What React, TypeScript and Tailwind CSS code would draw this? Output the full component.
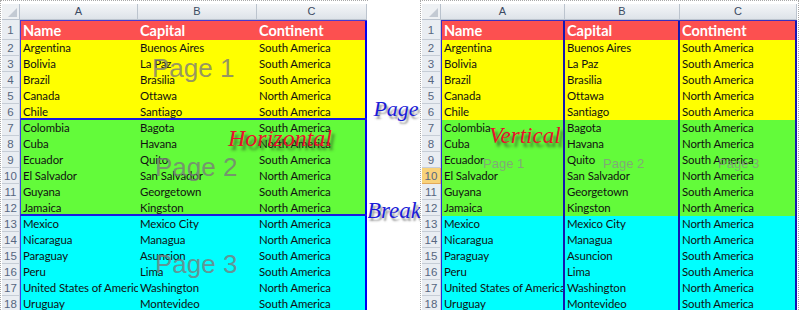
import React from "react";
import clsx from "clsx";

const DATA: [string, string, string][] = [
  ["Argentina", "Buenos Aires", "South America"],
  ["Bolivia", "La Paz", "South America"],
  ["Brazil", "Brasilia", "South America"],
  ["Canada", "Ottawa", "North America"],
  ["Chile", "Santiago", "South America"],
  ["Colombia", "Bagota", "South America"],
  ["Cuba", "Havana", "North America"],
  ["Ecuador", "Quito", "South America"],
  ["El Salvador", "San Salvador", "North America"],
  ["Guyana", "Georgetown", "South America"],
  ["Jamaica", "Kingston", "North America"],
  ["Mexico", "Mexico City", "North America"],
  ["Nicaragua", "Managua", "North America"],
  ["Paraguay", "Asuncion", "South America"],
  ["Peru", "Lima", "South America"],
  ["United States of America", "Washington", "North America"],
  ["Uruguay", "Montevideo", "South America"],
];

function rowBg(i: number) {
  if (i < 5) return "bg-[#ffff00]";
  if (i < 11) return "bg-[#63fb3a]";
  return "bg-[#00ffff]";
}

const FONT = { fontFamily: "Lato, 'Open Sans', sans-serif" };

function Corner({ w }: { w: string }) {
  return (
    <div className={clsx("relative h-[16px] bg-[#eef1f4] border-r border-b border-[#b9c2cd]", w)}>
      <svg className="absolute right-[2px] bottom-[2px]" width="9" height="9" viewBox="0 0 9 9">
        <polygon points="9,0 9,9 0,9" fill="#c3cad3" />
      </svg>
    </div>
  );
}

function ColHeader({ w, label }: { w: string; label: string }) {
  return (
    <div
      className={clsx(
        "h-[16px] bg-gradient-to-b from-[#f4f6f8] to-[#dee3e9] border-r border-b border-[#bcc4ce] text-center text-[11px] leading-[15px] text-[#3b4a62]",
        w
      )}
      style={{ fontFamily: "'Liberation Sans', Arial, sans-serif" }}
    >
      {label}
    </div>
  );
}

function RowHeader({ w, n, tall, hl }: { w: string; n: number; tall?: boolean; hl?: boolean }) {
  return (
    <div
      className={clsx(
        "shrink-0 border-b border-r text-center text-[11.5px] text-[#56667f]",
        tall ? "h-[20px] leading-[20px]" : "h-[16px] leading-[16px]",
        hl ? "bg-[#f8d27a] border-[#e3a95a]" : "bg-[#e9edf2] border-[#c6cdd6]",
        w
      )}
      style={{ fontFamily: "'Liberation Sans', Arial, sans-serif" }}
    >
      {n}
    </div>
  );
}

function LeftSheet() {
  return (
    <div className="relative w-[368px] h-[310px] shrink-0 overflow-hidden bg-white border-l border-t border-dotted border-[#a9a9a9] pt-[3px] pl-[1px]">
      <div className="flex">
        <Corner w="w-[18px]" />
        <ColHeader w="w-[118px]" label="A" />
        <ColHeader w="w-[119px]" label="B" />
        <ColHeader w="w-[110px]" label="C" />
      </div>
      <div className="flex">
        <RowHeader w="w-[18px]" n={1} tall />
        <div className="flex h-[20px] bg-[#fc5050] border-t border-l border-[#4a3ad0] text-white font-bold text-[14.5px] leading-[19px]" style={FONT}>
          <div className="w-[117px] pl-[2px]">Name</div>
          <div className="w-[119px] pl-[2px]">Capital</div>
          <div className="w-[110px] pl-[2px] border-r-2 border-[#0000ee]">Continent</div>
        </div>
      </div>
      {DATA.map((r, i) => (
        <div className="flex" key={i}>
          <RowHeader w="w-[18px]" n={i + 2} />
          <div
            className={clsx(
              "flex h-[16px] border-l border-[#3a3ae8] text-[11.4px] tracking-[-0.1px] leading-[16px] text-[#111]",
              rowBg(i),
              (i === 4 || i === 10) && "border-b-2 border-b-[#1a1ae0]"
            )}
            style={FONT}
          >
            <div className="w-[117px] pl-[2px] overflow-hidden whitespace-nowrap">{r[0]}</div>
            <div className="w-[119px] pl-[2px] overflow-hidden whitespace-nowrap">{r[1]}</div>
            <div className="w-[110px] pl-[2px] overflow-hidden whitespace-nowrap border-r-2 border-[#0000ee]">{r[2]}</div>
          </div>
        </div>
      ))}
      {[
        { t: "Page 1", x: "left-[151px] top-[54px]" },
        { t: "Page 2", x: "left-[154px] top-[153px]" },
        { t: "Page 3", x: "left-[154px] top-[250px]" },
      ].map((p) => (
        <div
          key={p.t}
          className={clsx("absolute text-[26px] leading-[26px] text-[#7a7a7a]/80 whitespace-nowrap", p.x)}
          style={{ fontFamily: "'Liberation Sans', Arial, sans-serif" }}
        >
          {p.t}
        </div>
      ))}
      <div
        className="absolute left-[227px] top-[125px] text-[24px] leading-[24px] text-[#e8102c] italic"
        style={{ fontFamily: "'Liberation Serif', serif", textShadow: "3px 4px 3px rgba(50,80,40,0.75)" }}
      >
        Horizontal
      </div>
    </div>
  );
}

function RightSheet() {
  return (
    <div className="relative w-[379px] h-[310px] shrink-0 overflow-hidden bg-white border-l border-t border-r border-dotted border-[#a9a9a9] pt-[3px] pl-[1px]">
      <div className="flex">
        <Corner w="w-[19px]" />
        <ColHeader w="w-[124px]" label="A" />
        <ColHeader w="w-[115px]" label="B" />
        <ColHeader w="w-[117px]" label="C" />
      </div>
      <div className="flex">
        <RowHeader w="w-[19px]" n={1} tall />
        <div className="flex h-[20px] bg-[#fc5050] border-t border-l border-[#3a30c0] text-white font-bold text-[14.5px] leading-[19px]" style={FONT}>
          <div className="w-[123px] pl-[2px] border-r-2 border-[#1616b0]">Name</div>
          <div className="w-[115px] pl-[2px] border-r-2 border-[#1616b0]">Capital</div>
          <div className="w-[117px] pl-[2px] border-r-2 border-[#1616b0]">Continent</div>
        </div>
      </div>
      {DATA.map((r, i) => (
        <div className="flex" key={i}>
          <RowHeader w="w-[19px]" n={i + 2} hl={i + 2 === 10} />
          <div
            className={clsx("flex h-[16px] border-l border-[#2a2ad0] text-[11.4px] tracking-[-0.1px] leading-[16px] text-[#111]", rowBg(i))}
            style={FONT}
          >
            <div className="w-[123px] pl-[2px] overflow-hidden whitespace-nowrap border-r-2 border-[#1616b0]">{r[0]}</div>
            <div className="w-[115px] pl-[2px] overflow-hidden whitespace-nowrap border-r-2 border-[#1616b0]">{r[1]}</div>
            <div className="w-[117px] pl-[2px] overflow-hidden whitespace-nowrap border-r-2 border-[#1616b0]">{r[2]}</div>
          </div>
        </div>
      ))}
      {[
        { t: "Page 1", x: "left-[62px] top-[156px]" },
        { t: "Page 2", x: "left-[182px] top-[156px]" },
        { t: "Page 3", x: "left-[297px] top-[156px]" },
      ].map((p) => (
        <div
          key={p.t}
          className={clsx("absolute text-[13px] leading-[13px] text-[#8c8c8c]/75 whitespace-nowrap", p.x)}
          style={{ fontFamily: "'Liberation Sans', Arial, sans-serif" }}
        >
          {p.t}
        </div>
      ))}
      <div
        className="absolute left-[68px] top-[123px] text-[23px] leading-[23px] text-[#e8102c] italic"
        style={{ fontFamily: "'Liberation Serif', serif", textShadow: "3px 4px 3px rgba(50,80,40,0.75)" }}
      >
        Vertical
      </div>
    </div>
  );
}

export default function App() {
  return (
    <div className="flex w-[799px] h-[310px] bg-white overflow-hidden">
      <LeftSheet />
      <div
        className="w-[52px] shrink-0 flex flex-col items-center pt-[97px] text-[#1c1cd8] italic"
        style={{ fontFamily: "'Liberation Serif', serif", textShadow: "2px 3px 2px rgba(90,90,90,0.6)" }}
      >
        <div className="text-[22px] leading-[24px] pl-[4px]">Page</div>
        <div className="text-[23px] leading-[24px] mt-[78px]">Break</div>
      </div>
      <RightSheet />
    </div>
  );
}
